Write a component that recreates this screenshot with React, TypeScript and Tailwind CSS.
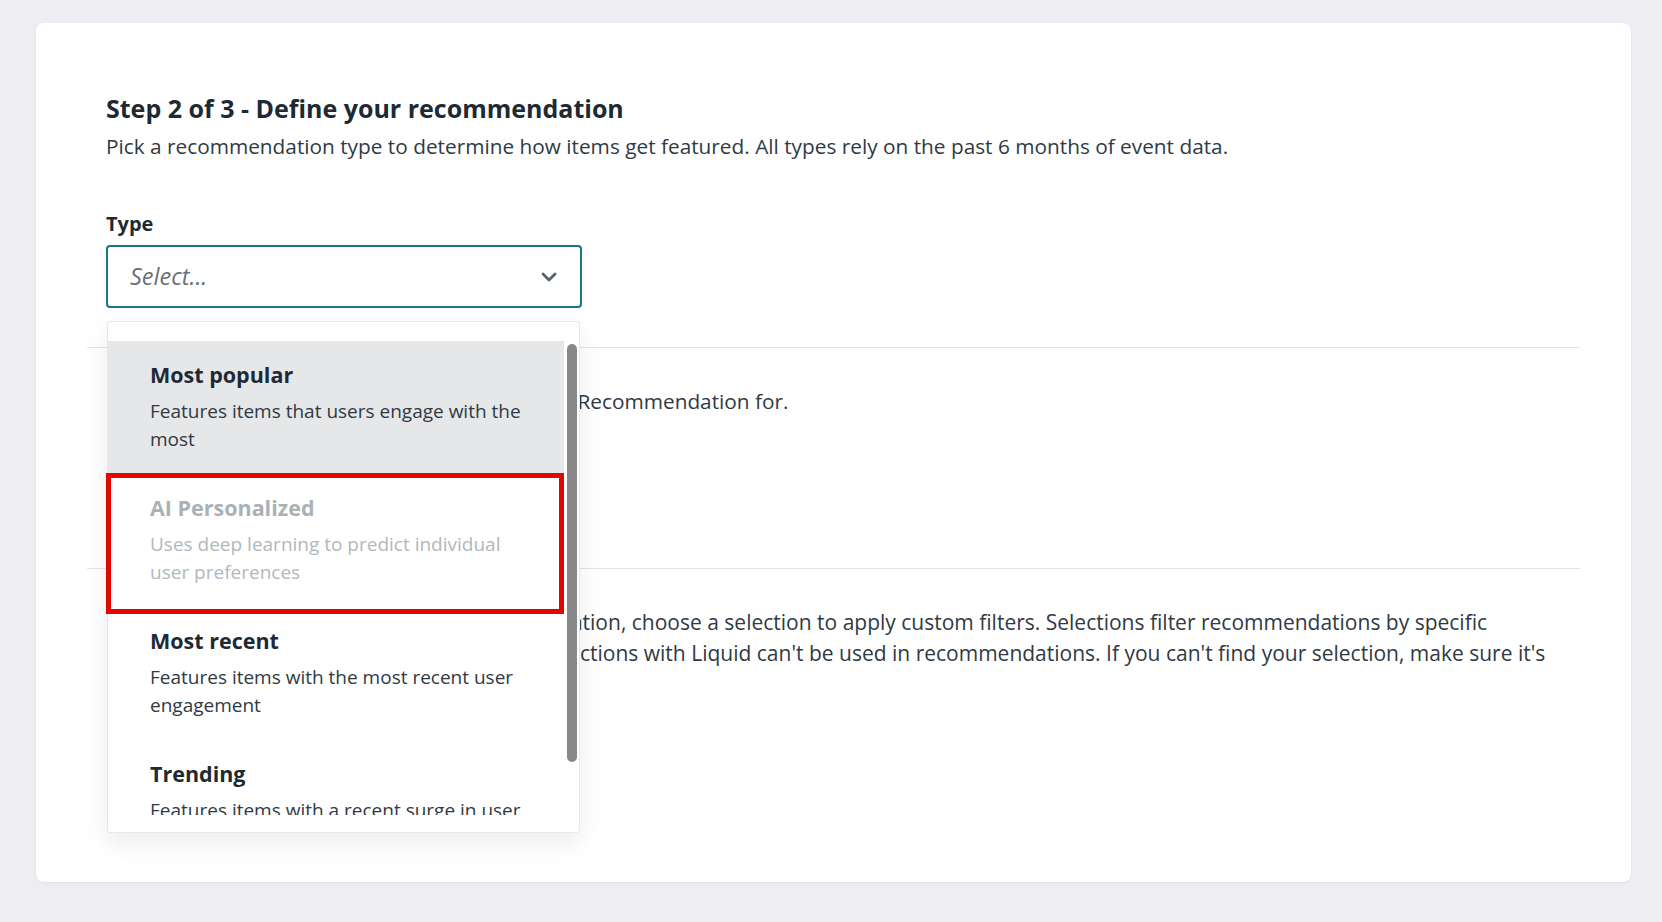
import { ChevronDown } from "lucide-react";

const options = [
  {
    title: "Most popular",
    lines: ["Features items that users engage with the", "most"],
    state: "active",
  },
  {
    title: "AI Personalized",
    lines: ["Uses deep learning to predict individual", "user preferences"],
    state: "disabled",
  },
  {
    title: "Most recent",
    lines: ["Features items with the most recent user", "engagement"],
    state: "normal",
  },
  {
    title: "Trending",
    lines: ["Features items with a recent surge in user", "engagement"],
    state: "normal",
  },
];

export default function App() {
  return (
    <div
      className="min-h-screen bg-[#eeeef2] pt-[23px] pl-[36px] pr-[31px] pb-[40px]"
      style={{ fontFamily: "'Open Sans', Lato, sans-serif" }}
    >
      <div className="bg-white rounded-[8px] shadow-[0_1px_3px_rgba(0,0,0,0.06)] h-[859px] px-[51px] pt-[69px]">
        {/* Step header + type select */}
        <div className="px-[19px] pb-[39px]">
          <h1 className="text-[25px] leading-[32px] font-bold text-[#1e2a33]">
            Step 2 of 3 - Define your recommendation
          </h1>
          <p className="mt-[8px] text-[20.8px] leading-[28px] text-[#2f3a43]">
            Pick a recommendation type to determine how items get featured. All
            types rely on the past 6 months of event data.
          </p>
          <p className="mt-[52px] text-[20px] leading-[24px] font-bold text-[#1e2a33]">
            Type
          </p>
          <div className="relative mt-[9px] w-[476px]">
            <div className="h-[63px] border-2 border-[#1b7585] rounded-[4px] pl-[22px] pr-[19px] flex items-center justify-between">
              <span className="italic text-[23.5px] text-[#66717a]">
                Select...
              </span>
              <ChevronDown className="w-[24px] h-[24px] text-[#55626c]" strokeWidth={2.8} />
            </div>

            {/* Dropdown menu */}
            <div className="absolute z-10 left-[1px] top-[76px] w-[473px] h-[512px] bg-white border border-[#e6e8ea] rounded-[3px] shadow-[0_10px_24px_rgba(0,0,0,0.08)] pt-[19px]">
              <div className="flex h-[474px] overflow-hidden">
                <div className="w-[456px] shrink-0">
                  {options.map((o) => (
                    <div
                      key={o.title}
                      className={`h-[133px] pl-[42px] pr-[20px] pt-[20px] ${
                        o.state === "active" ? "bg-[#e6e7e9]" : ""
                      }`}
                    >
                      <p
                        className={`text-[21.5px] leading-[28px] font-bold ${
                          o.state === "disabled" ? "text-[#a9b1b7]" : "text-[#1e2a33]"
                        }`}
                      >
                        {o.title}
                      </p>
                      <div
                        className={`mt-[8px] text-[19px] leading-[28px] whitespace-nowrap ${
                          o.state === "disabled" ? "text-[#b0b8be]" : "text-[#2f3a43]"
                        }`}
                      >
                        {o.lines.map((l) => (
                          <p key={l}>{l}</p>
                        ))}
                      </div>
                    </div>
                  ))}
                </div>
                <div className="pl-[3px] pt-[3px]">
                  <div className="w-[10px] h-[418px] rounded-full bg-[#888888]" />
                </div>
              </div>
              {/* highlighted option annotation */}
              <div className="absolute left-[-2px] top-[151px] w-[458px] h-[141px] border-[5px] border-[#e10600]" />
            </div>
          </div>
        </div>

        {/* Catalog section */}
        <div className="border-t border-[#e3e5e8] h-[221px] px-[21px] pt-[8px]">
          <p className="text-[20px] leading-[24px] font-bold text-[#1e2a33]">
            Catalog
          </p>
          <p className="mt-[7px] text-[20.8px] leading-[28px] text-[#2f3a43] whitespace-nowrap">
            {"Select the Catalog which you'd like to create this Recommendation for."}
          </p>
          <div className="mt-[12px] w-[440px] h-[63px] border border-[#c9ced3] rounded-[4px]" />
        </div>

        {/* Selection section */}
        <div className="border-t border-[#e3e5e8] px-[21px] pt-[11px]">
          <p className="text-[20px] leading-[24px] font-bold text-[#1e2a33]">
            Selection (optional)
          </p>
          <p className="mt-[3px] text-[21px] leading-[31px] text-[#2f3a43] whitespace-nowrap">
            {"If you've chosen a catalog for your Recommendation, choose a selection to apply custom filters. Selections filter recommendations by specific"}
            <br />
            {"attribute values of your catalog items. Note, selections with Liquid can't be used in recommendations. If you can't find your selection, make sure it's"}
            <br />
            {"been created in the catalog first."}
          </p>
        </div>
      </div>
    </div>
  );
}
